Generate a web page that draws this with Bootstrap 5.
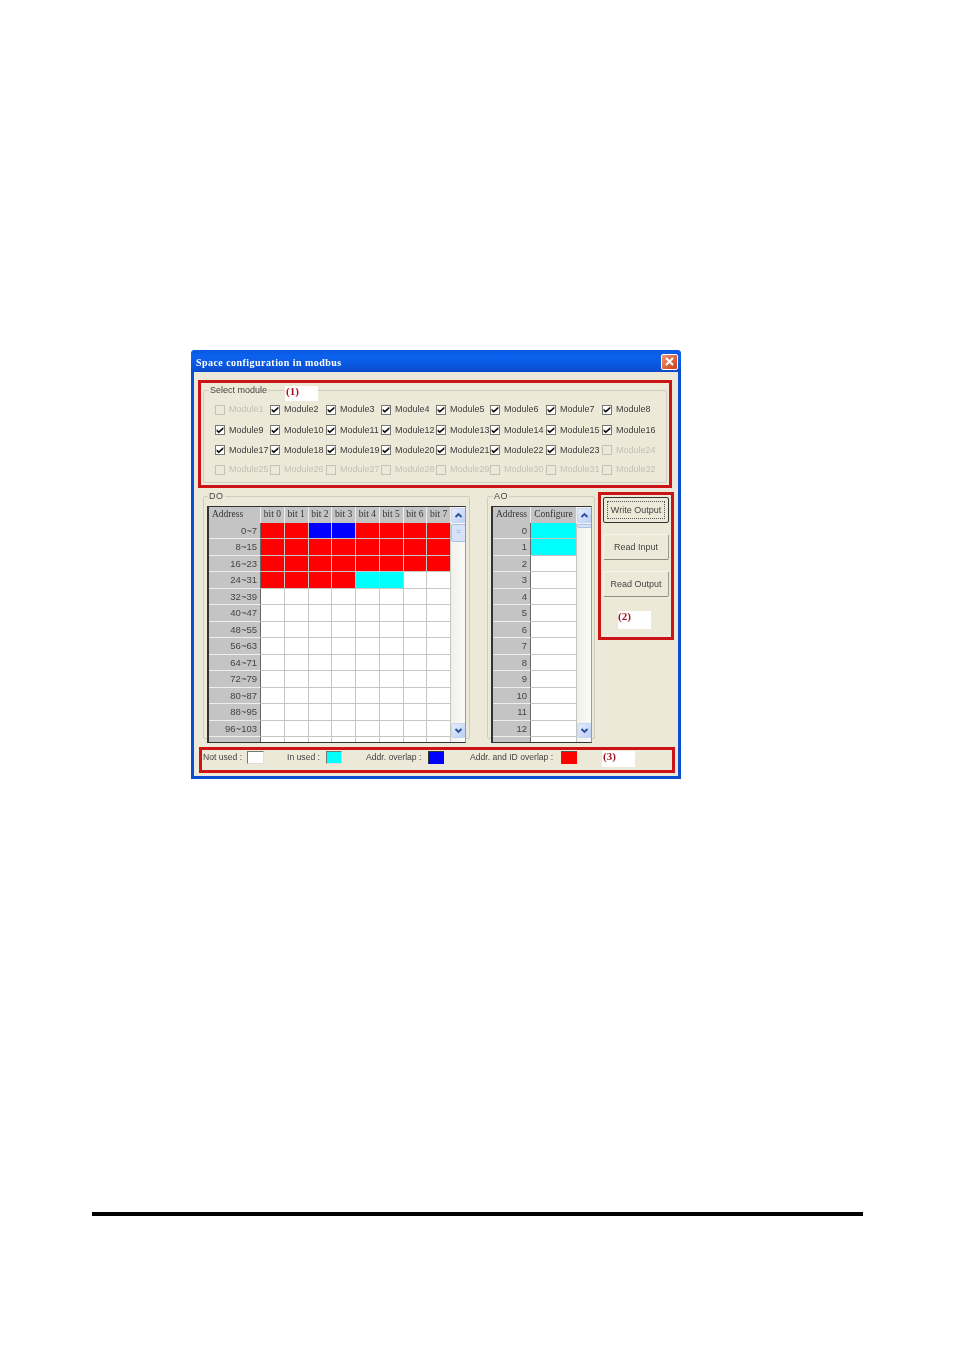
<!DOCTYPE html>
<html lang="en">
<head>
<meta charset="utf-8">
<title>Space configuration in modbus</title>
<link rel="stylesheet" href="https://cdn.jsdelivr.net/npm/bootstrap@5.3.0/dist/css/bootstrap.min.css">
<style>
body{background:#fff;margin:0}
.dlg{width:490px;height:429px;margin:350px 0 0 191px;background:#ece9d8;border:3px solid #0a4fd0;border-top:0;border-radius:4px 4px 0 0;font:9px/13px "Liberation Sans",sans-serif;color:#444;position:relative;filter:blur(.3px)}
.ttl{height:22px;margin:0 -3px;padding:3px 3px 0 5px;background:linear-gradient(#0a58e0,#0b62ee 30%,#0a55dc 75%,#0a4bc8);border-radius:4px 4px 0 0}
.ttl-t{font:bold 10px/14px "Liberation Serif",serif;color:#fff;letter-spacing:.45px}
.xbtn{width:17px;height:16px;margin-top:-2px;border:1px solid #fff;border-radius:2px;background:linear-gradient(135deg,#eb9a7c,#d9562e 70%,#c8431f)}
.redb{border:3px solid #cc1416}
.box1{width:474px;height:108px;margin:8px 0 0 4px;padding:2px 2px 0}
.gbx{border:1px solid #cfcdbd;margin:0;min-width:0;border-radius:2px}
.gbx>legend{float:none;width:auto;font-size:9px;line-height:10px;margin:0;padding:0 1px;color:#444}
.g1{height:98px;padding:4px 0 0 11px}
.g1>legend{margin-left:-6px}
.mods{display:grid;grid-template-columns:55px 56px 55px 55px 54px 56px 56px 58px;grid-template-rows:21px 20px 20px 19px}
.mod{display:flex;align-items:center;white-space:nowrap;color:#3c3c3c}
.mod.off{color:#c2c0b3}
.cb{flex:none;width:10px;height:10px;margin-right:4px;background:#fff;border:1px solid #77776f;position:relative}
.off .cb{background:#ece9d8;border-color:#c4c2b4}
.on .cb::after{content:"";position:absolute;inset:0;background:#111;clip-path:polygon(8% 42%,35% 62%,92% 12%,92% 40%,35% 92%,8% 68%)}
.tag{font:bold 11px/11px "Liberation Serif",serif;color:#a51220;background:#fff}
.tag1{position:absolute;left:91px;top:36px;width:33px;height:15px;padding-left:1px}
.mid{height:252px;margin:4px 0 0 9px;align-items:flex-start}
.gdo{width:267px;height:248px;margin-top:-1px;padding:5px 3px 0}
.gdo>legend{margin-left:1px;letter-spacing:.6px}
.gao{width:108px;height:248px;margin:-1px 3px 0 17px;padding:5px 2px 0 3px}
.gao>legend{margin-left:2px;letter-spacing:.6px}
.dg{height:237px;border:1px solid #333;border-left-width:2px;border-right-color:#9a9a94;overflow:hidden;background:#fff}
.cells{display:grid;grid-auto-rows:16.5px;grid-template-rows:15.5px;flex:none}
.cdo{grid-template-columns:52px repeat(8,23.75px);width:242px}
.cao{grid-template-columns:38px 46px;width:84px}
.cells>div{border-right:1px solid #c6c6c2;border-bottom:1px solid #c6c6c2;overflow:hidden;white-space:nowrap}
.cells>.hd{background:#c4c4c4;font:9.5px/14px "Liberation Serif",serif;color:#333;text-align:center;border-right:1px solid #eee;border-bottom:0}
.cells>.hl{text-align:left;padding-left:3px}
.cells>.ad{background:#c4c4c4;text-align:right;padding-right:3px;line-height:16px;font-size:9.5px;border-right:1px solid #666;border-bottom:1px solid #eee;color:#444}
.cr{background:#f00}.cb2{background:#00f}.cc{background:#0ff}
.sb{flex:none;width:15px;background:linear-gradient(90deg,#f1f0ea,#fbfbf8)}
.arr{width:15px;height:15px;margin:1px 0 0;background:linear-gradient(135deg,#e3ecfc,#bccff5);border:1px solid #c8d6f2;border-radius:2px}
.arr svg{display:block;width:13px;height:13px}
.thu{height:18px;width:15px;margin-top:1px;background:#d6e2fa;border:1px solid #aebfe8;border-radius:2px;color:#8fa6dc;font-size:8px;line-height:14px;text-align:center}
.thu.mini{height:4px;line-height:0}
.box2{width:76px;height:148px;padding:2px}
.wbtn{width:66px;height:26px;padding:0;font:9px/13px "Liberation Sans",sans-serif;color:#444;background:#ece9d8;border:1px solid #f6f5ee;border-right-color:#9c9a8c;border-bottom-color:#8f8d80;border-radius:2px;margin-bottom:11px;--bs-btn-hover-bg:#ece9d8}
.wbtn.foc{border:1.5px solid #333;outline:1px dotted #555;outline-offset:-5px}
.tag2{display:block;width:33px;height:18px;margin:3px 0 0 15px;padding-top:0}
.box3{display:grid;width:476px;height:26px;margin:3px 0 0 5px;padding:1px 0 0 1px;grid-template-columns:44px 17px 23px 39px 16px 24px 62px 16px 26px 91px 16px 25px 33px;align-items:start}
.lbl{white-space:nowrap;line-height:12px;font-size:8.6px}
.sw{height:13px;border:1px solid;border-color:#777 #ddd #ddd #777}
.s-w{background:#fff}.s-c{background:#0ff}.s-b{background:#00f;border-color:#333 #00f #00f #333}.s-r{background:#f00;border-color:#555 #f00 #f00 #555}
.tag3{height:16px;padding-left:1px}
.rule{height:4px;width:771px;margin:433px 0 0 92px;background:#000}
</style>
</head>
<body>
<svg width="0" height="0" class="position-absolute"><defs>
<symbol id="up" viewBox="0 0 13 13"><path d="M3.5 8 6.5 5l3 3" fill="none" stroke="#2a4f9a" stroke-width="1.8"/></symbol>
<symbol id="dn" viewBox="0 0 13 13"><path d="M3.5 5l3 3 3-3" fill="none" stroke="#2a4f9a" stroke-width="1.8"/></symbol>
</defs></svg>
<div class="dlg">
  <div class="ttl d-flex align-items-center justify-content-between">
    <span class="ttl-t">Space configuration in modbus</span>
    <span class="xbtn d-flex align-items-center justify-content-center"><svg width="11" height="11" viewBox="0 0 11 11"><path d="M2 2l7 7M9 2l-7 7" stroke="#fff" stroke-width="2"/></svg></span>
  </div>
  <div class="box1 redb">
    <fieldset class="gbx g1">
      <legend>Select module</legend>
      <div class="mods">
        <label class="mod off"><span class="cb"></span>Module1</label>
        <label class="mod on"><span class="cb"></span>Module2</label>
        <label class="mod on"><span class="cb"></span>Module3</label>
        <label class="mod on"><span class="cb"></span>Module4</label>
        <label class="mod on"><span class="cb"></span>Module5</label>
        <label class="mod on"><span class="cb"></span>Module6</label>
        <label class="mod on"><span class="cb"></span>Module7</label>
        <label class="mod on"><span class="cb"></span>Module8</label>
        <label class="mod on"><span class="cb"></span>Module9</label>
        <label class="mod on"><span class="cb"></span>Module10</label>
        <label class="mod on"><span class="cb"></span>Module11</label>
        <label class="mod on"><span class="cb"></span>Module12</label>
        <label class="mod on"><span class="cb"></span>Module13</label>
        <label class="mod on"><span class="cb"></span>Module14</label>
        <label class="mod on"><span class="cb"></span>Module15</label>
        <label class="mod on"><span class="cb"></span>Module16</label>
        <label class="mod on"><span class="cb"></span>Module17</label>
        <label class="mod on"><span class="cb"></span>Module18</label>
        <label class="mod on"><span class="cb"></span>Module19</label>
        <label class="mod on"><span class="cb"></span>Module20</label>
        <label class="mod on"><span class="cb"></span>Module21</label>
        <label class="mod on"><span class="cb"></span>Module22</label>
        <label class="mod on"><span class="cb"></span>Module23</label>
        <label class="mod off"><span class="cb"></span>Module24</label>
        <label class="mod off"><span class="cb"></span>Module25</label>
        <label class="mod off"><span class="cb"></span>Module26</label>
        <label class="mod off"><span class="cb"></span>Module27</label>
        <label class="mod off"><span class="cb"></span>Module28</label>
        <label class="mod off"><span class="cb"></span>Module29</label>
        <label class="mod off"><span class="cb"></span>Module30</label>
        <label class="mod off"><span class="cb"></span>Module31</label>
        <label class="mod off"><span class="cb"></span>Module32</label>
      </div>
    </fieldset>
  </div>
  <span class="tag tag1">(1)</span>
  <div class="mid d-flex">
    <fieldset class="gbx gdo">
      <legend>DO</legend>
      <div class="dg d-flex">
        <div class="cells cdo">
          <div class="hd hl">Address</div><div class="hd">bit 0</div><div class="hd">bit 1</div><div class="hd">bit 2</div><div class="hd">bit 3</div><div class="hd">bit 4</div><div class="hd">bit 5</div><div class="hd">bit 6</div><div class="hd">bit 7</div>
          <div class="ad">0~7</div><div class="cr"></div><div class="cr"></div><div class="cb2"></div><div class="cb2"></div><div class="cr"></div><div class="cr"></div><div class="cr"></div><div class="cr"></div>
          <div class="ad">8~15</div><div class="cr"></div><div class="cr"></div><div class="cr"></div><div class="cr"></div><div class="cr"></div><div class="cr"></div><div class="cr"></div><div class="cr"></div>
          <div class="ad">16~23</div><div class="cr"></div><div class="cr"></div><div class="cr"></div><div class="cr"></div><div class="cr"></div><div class="cr"></div><div class="cr"></div><div class="cr"></div>
          <div class="ad">24~31</div><div class="cr"></div><div class="cr"></div><div class="cr"></div><div class="cr"></div><div class="cc"></div><div class="cc"></div><div></div><div></div>
          <div class="ad">32~39</div><div></div><div></div><div></div><div></div><div></div><div></div><div></div><div></div>
          <div class="ad">40~47</div><div></div><div></div><div></div><div></div><div></div><div></div><div></div><div></div>
          <div class="ad">48~55</div><div></div><div></div><div></div><div></div><div></div><div></div><div></div><div></div>
          <div class="ad">56~63</div><div></div><div></div><div></div><div></div><div></div><div></div><div></div><div></div>
          <div class="ad">64~71</div><div></div><div></div><div></div><div></div><div></div><div></div><div></div><div></div>
          <div class="ad">72~79</div><div></div><div></div><div></div><div></div><div></div><div></div><div></div><div></div>
          <div class="ad">80~87</div><div></div><div></div><div></div><div></div><div></div><div></div><div></div><div></div>
          <div class="ad">88~95</div><div></div><div></div><div></div><div></div><div></div><div></div><div></div><div></div>
          <div class="ad">96~103</div><div></div><div></div><div></div><div></div><div></div><div></div><div></div><div></div>
          <div class="ad"></div><div></div><div></div><div></div><div></div><div></div><div></div><div></div><div></div>
        </div>
        <div class="sb d-flex flex-column">
          <div class="arr"><svg><use href="#up"/></svg></div>
          <div class="thu">=</div>
          <div class="arr mt-auto mb-1"><svg><use href="#dn"/></svg></div>
        </div>
      </div>
    </fieldset>
    <fieldset class="gbx gao">
      <legend>AO</legend>
      <div class="dg d-flex">
        <div class="cells cao">
          <div class="hd">Address</div><div class="hd">Configure</div>
          <div class="ad">0</div><div class="cc"></div>
          <div class="ad">1</div><div class="cc"></div>
          <div class="ad">2</div><div></div>
          <div class="ad">3</div><div></div>
          <div class="ad">4</div><div></div>
          <div class="ad">5</div><div></div>
          <div class="ad">6</div><div></div>
          <div class="ad">7</div><div></div>
          <div class="ad">8</div><div></div>
          <div class="ad">9</div><div></div>
          <div class="ad">10</div><div></div>
          <div class="ad">11</div><div></div>
          <div class="ad">12</div><div></div>
          <div class="ad"></div><div></div>
        </div>
        <div class="sb d-flex flex-column">
          <div class="arr"><svg><use href="#up"/></svg></div>
          <div class="thu mini"></div>
          <div class="arr mt-auto mb-1"><svg><use href="#dn"/></svg></div>
        </div>
      </div>
    </fieldset>
    <div class="box2 redb">
      <button type="button" class="btn wbtn foc">Write Output</button>
      <button type="button" class="btn wbtn">Read Input</button>
      <button type="button" class="btn wbtn">Read Output</button>
      <span class="tag tag2">(2)</span>
    </div>
  </div>
  <div class="box3 redb">
    <span class="lbl">Not used :</span><span class="sw s-w"></span><span></span>
    <span class="lbl">In used :</span><span class="sw s-c"></span><span></span>
    <span class="lbl">Addr. overlap :</span><span class="sw s-b"></span><span></span>
    <span class="lbl">Addr. and ID overlap :</span><span class="sw s-r"></span><span></span>
    <span class="tag tag3">(3)</span>
  </div>
</div>
<div class="rule"></div>
<script src="https://cdn.jsdelivr.net/npm/bootstrap@5.3.0/dist/js/bootstrap.bundle.min.js"></script>
</body>
</html>
